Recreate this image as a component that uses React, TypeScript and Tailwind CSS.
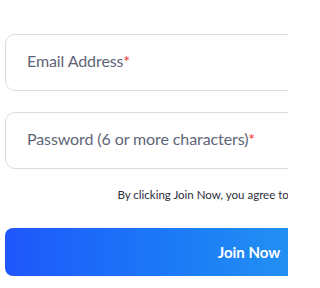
import React from 'react';

const Field: React.FC<{ label: string }> = ({ label }) => (
  <div className="h-[57px] rounded-[10px] border border-[#d6dde6] bg-white flex items-center px-[21px] pb-[3px]">
    <span className="text-[16px] tracking-[-0.1px] text-[#5e6577]">
      {label}
      <span className="text-[#f0302a]">*</span>
    </span>
  </div>
);

export default function App() {
  return (
    <div className="w-[288px] h-[288px] overflow-hidden bg-white" style={{ fontFamily: 'Lato, "Open Sans", sans-serif' }}>
      <div className="w-[488px] ml-[5px] pt-[34px] flex flex-col">
        <Field label="Email Address" />
        <div className="h-[21px]" />
        <Field label="Password (6 or more characters)" />
        <p className="mt-[18px] text-center text-[11.5px] leading-[16px] text-[#2b2d3c] whitespace-nowrap">
          By clicking Join Now, you agree to the User Terms of
        </p>
        <button className="mt-[25px] h-[48px] rounded-[8px] bg-gradient-to-r from-[#2056fb] to-[#38b2ea] text-white text-[15px] font-bold">
          Join Now
        </button>
      </div>
    </div>
  );
}
